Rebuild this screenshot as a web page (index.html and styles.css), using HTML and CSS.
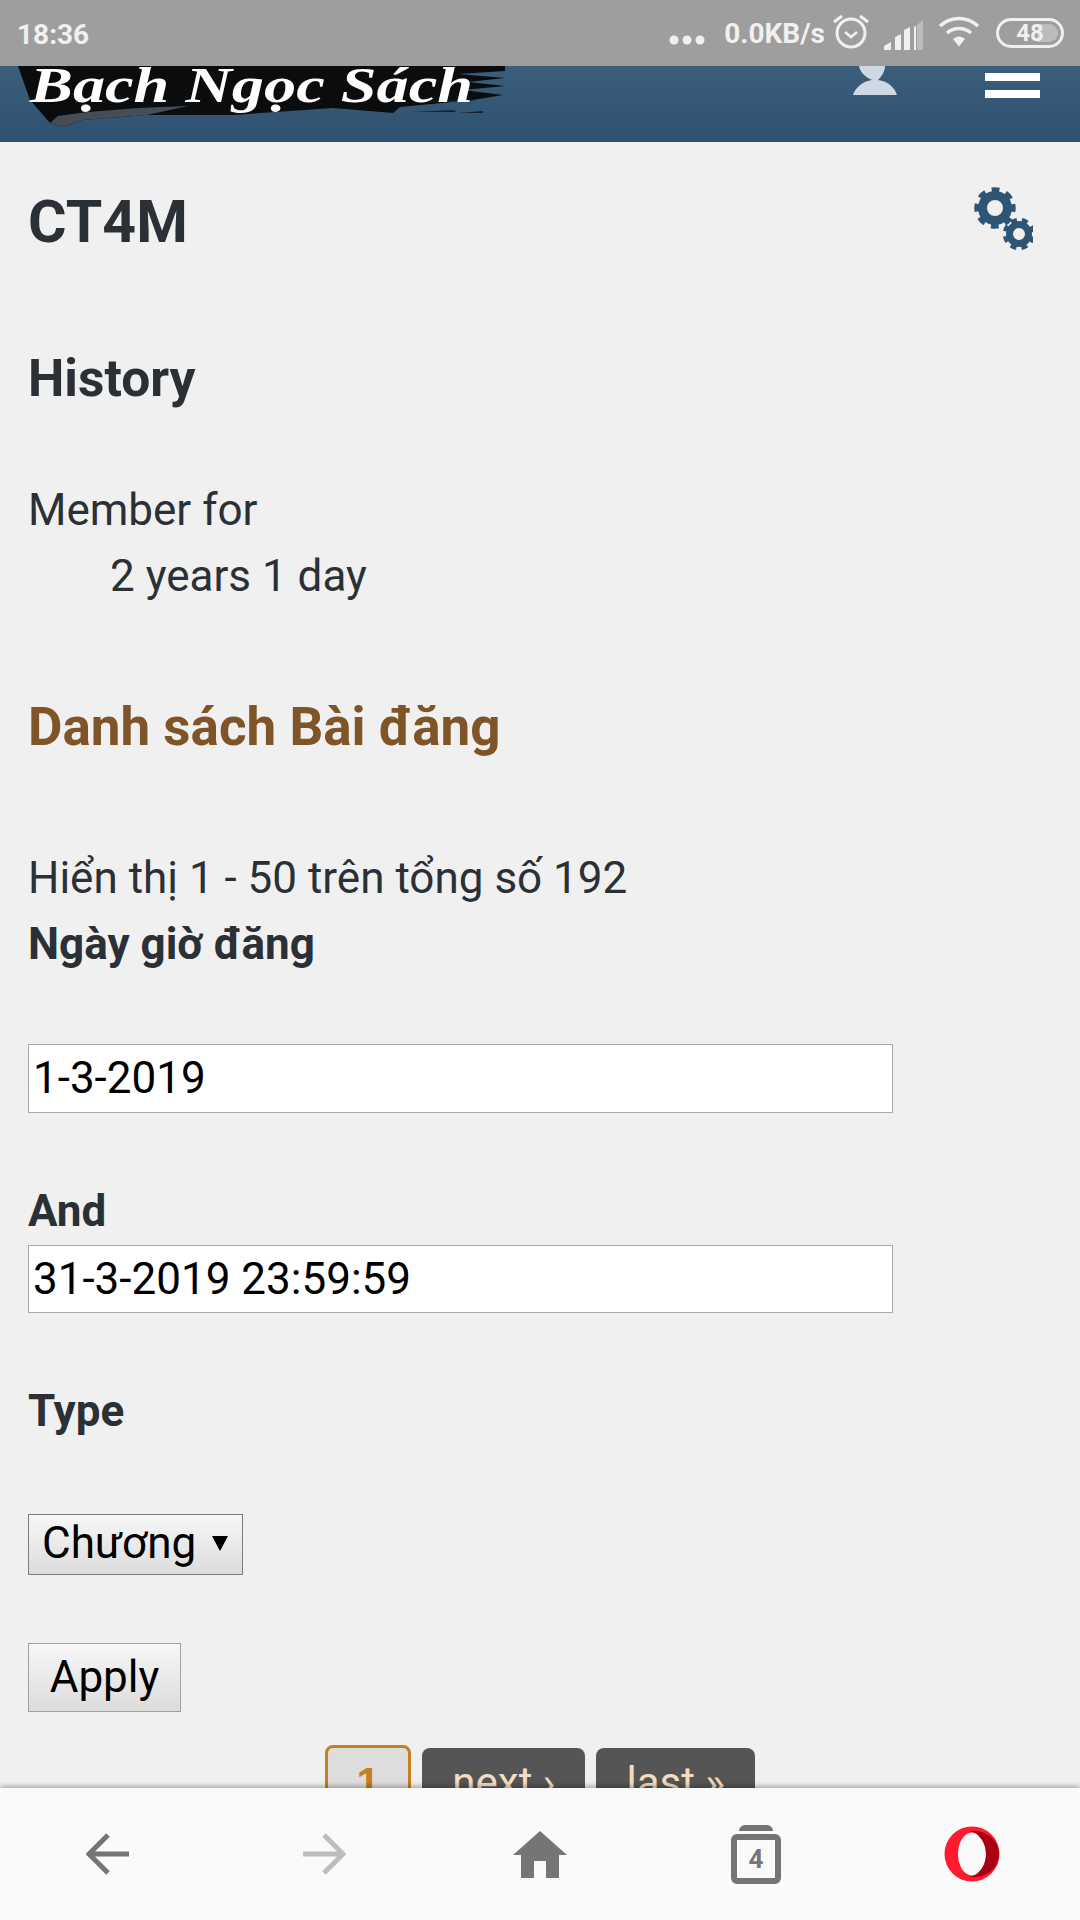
FILE: index.html
```html
<!DOCTYPE html>
<html lang="vi">
<head>
<meta charset="utf-8">
<title>CT4M</title>
<link rel="stylesheet" href="styles.css">
</head>
<body>
<div class="screen">
  <div class="status">
    <span class="clock">18:36</span>
    <div class="status-right">
      <svg class="dots" width="36" height="12" viewBox="0 0 36 12"><circle cx="5" cy="6" r="4.5"/><circle cx="18" cy="6" r="4.5"/><circle cx="31" cy="6" r="4.5"/></svg>
      <span class="speed">0.0KB/s</span>
      <svg class="alarm" width="36" height="36" viewBox="0 0 36 36"><circle cx="18" cy="20" r="14" fill="none" stroke="#f0f0f0" stroke-width="3"/><path d="M12 19l6 5 6-5" fill="none" stroke="#f0f0f0" stroke-width="2.5"/><path d="M1 9l8-6M35 9l-8-6" stroke="#f0f0f0" stroke-width="3"/></svg>
      <svg class="signal" width="40" height="30" viewBox="0 0 40 30"><path d="M0 30v-4l7-4v8zM11 30V17l6-3v16zM20 30V10l6-3v23zM30 30V7l2-1v24z" fill="#f0f0f0"/><path d="M33 30V5l6-5v30z" fill="#bcbcbc"/></svg>
      <svg class="wifi" width="42" height="32" viewBox="0 0 42 32"><path d="M2 10C13 0 29 0 40 10M9 17c7-6 17-6 24 0" fill="none" stroke="#f0f0f0" stroke-width="3.6"/><path d="M15 23c4-3.500 8-3.500 12 0l-6 7.500z" fill="#f0f0f0"/></svg>
      <div class="battery"><div class="battery-fill"></div><span class="battery-num">48</span></div>
    </div>
  </div>

  <header class="site-head">
    <svg class="logo" width="500" height="76" viewBox="0 0 500 76">
      <path d="M0 0H487V5L440 8 487 12 450 16 487 20 445 24 485 29 455 34 382 41 375 47 315 42 215 49 129 49 65 54 45 61 32 57 12 34z" fill="#0b0c0e"/>
      <path d="M32 57L45 61 65 54 129 49 170 40 120 42 70 46 40 50z" fill="#464e55"/>
      <path d="M400 36l60-3-10 3zM395 46l40-2 4 2zM440 47l25-2 0 2z" fill="#1a222a"/>
      <text class="logo-text" x="12" y="36" textLength="443" lengthAdjust="spacingAndGlyphs">Bạch Ngọc Sách</text>
    </svg>
    <div class="head-actions">
      <svg class="user" width="44" height="30" viewBox="0 0 44 30"><path d="M6 0H32C32 6 28 11 25 14 35 15 42 22 44 29H0C2 22 10 15 19 14 12 11 7 6 6 0z" fill="#ced9e4"/></svg>
      <div class="burger"><span class="burger-bar"></span><span class="burger-bar"></span></div>
    </div>
  </header>

  <main class="content">
    <div class="title-row">
      <h1 class="title">CT4M</h1>
      <svg class="gears" width="62" height="66" viewBox="0 0 62 66">
        <g fill="none" stroke="#2f5575">
          <circle cx="24" cy="24" r="12.500" stroke-width="9"/>
          <circle cx="24" cy="24" r="18" stroke-width="5.500" stroke-dasharray="7.500 6.640" transform="rotate(-12 24 24)"/>
          <circle cx="48" cy="50" r="9.500" stroke-width="7"/>
          <circle cx="48" cy="50" r="14" stroke-width="4.500" stroke-dasharray="6 5" transform="rotate(10 48 50)"/>
        </g>
      </svg>
    </div>

    <h2 class="section">History</h2>
    <dl class="history">
      <dt class="history-term">Member for</dt>
      <dd class="history-value">2 years 1 day</dd>
    </dl>

    <h2 class="section section-accent">Danh sách Bài đăng</h2>
    <p class="summary">Hiển thị 1 - 50 trên tổng số 192</p>

    <form class="filters">
      <label class="field-label label-first">Ngày giờ đăng</label>
      <div class="input first-input">1-3-2019</div>
      <label class="field-label label-and">And</label>
      <div class="input second-input">31-3-2019 23:59:59</div>
      <label class="field-label label-type">Type</label>
      <div class="select"><span>Chương</span><span class="caret"></span></div>
      <div class="apply">Apply</div>
    </form>

    <nav class="pager">
      <span class="page current">1</span>
      <span class="page">next ›</span>
      <span class="page">last »</span>
    </nav>
  </main>

  <footer class="browser-bar">
    <div class="bar-item"><svg width="44" height="44" viewBox="0 0 44 44"><path d="M43 22H3M22 3L3 22l19 19" fill="none" stroke="#757575" stroke-width="5"/></svg></div>
    <div class="bar-item"><svg width="44" height="44" viewBox="0 0 44 44"><path d="M1 22h40M22 3l19 19-19 19" fill="none" stroke="#bdbdbd" stroke-width="5"/></svg></div>
    <div class="bar-item"><svg width="54" height="47" viewBox="0 0 54 47"><path d="M27 0l27 24H46V47H33V30H21V47H8V24H0z" fill="#757575"/></svg></div>
    <div class="bar-item tabs-item">
      <div class="tabs-stack">
        <span class="tabs-top"></span>
        <span class="tabs-box">4</span>
      </div>
    </div>
    <div class="bar-item"><svg width="56" height="56" viewBox="0 0 56 56"><circle cx="28" cy="28" r="27.500" fill="#ff1b2d"/><ellipse cx="28" cy="28" rx="14" ry="21.500" fill="#fafafa"/><path d="M25 5c17-2 30 9 30 23S42 53 25 51c9-1 17-11 17-23S34 6 25 5z" fill="#a70014"/></svg></div>
  </footer>
</div>
</body>
</html>
```
FILE: styles.css
```css
* { box-sizing: border-box; }
html, body { margin: 0; padding: 0; }
body { font-family: Roboto, "Noto Sans", sans-serif; color: #2a3035; }
.screen { width: 1080px; height: 1920px; display: flex; flex-direction: column; overflow: hidden; background: #f0f0f0; }

.status { height: 66px; flex: none; background: #9e9e9e; color: #f0f0f0; display: flex; justify-content: space-between; align-items: center; padding: 2px 16px 0 17px; font-weight: 700; font-size: 28px; position: relative; z-index: 2; }
.status-right { display: flex; align-items: center; margin-top: -2px; }
.dots { fill: #f0f0f0; margin-top: 14px; }
.speed { margin-left: 19px; font-size: 28px; }
.alarm { margin-left: 8px; margin-top: -4px; }
.signal { margin-left: 15px; margin-top: 4px; }
.wifi { margin-left: 14px; margin-top: -2px; }
.battery { width: 68px; height: 30px; margin-left: 16px; border: 3px solid #f0f0f0; border-radius: 15px; position: relative; display: flex; align-items: center; justify-content: center; padding: 3px; }
.battery-fill { position: absolute; left: 3px; top: 3px; bottom: 3px; right: 3px; border-radius: 10px; background: linear-gradient(90deg, #9e9e9e 0 62%, #bcbcbc 62%); }
.battery-num { position: relative; font-size: 24px; line-height: 1; }

.site-head { height: 76px; flex: none; background: linear-gradient(#3b5e7b, #2e5170); display: flex; justify-content: space-between; padding-left: 18px; overflow: hidden; }
.logo { flex: none; }
.logo-text { font-family: "Liberation Serif", serif; font-style: italic; font-weight: 700; font-size: 50px; fill: #fff; }
.head-actions { display: flex; padding-right: 40px; align-items: flex-start; }
.user { display: block; margin-right: 88px; }
.burger { width: 55px; display: flex; flex-direction: column; gap: 9px; padding-top: 7px; }
.burger-bar { height: 8px; background: #fff; display: block; }

.content { flex: 1; min-height: 0; overflow: hidden; padding: 0 28px; }
.title-row { display: flex; justify-content: space-between; align-items: flex-start; padding-top: 47px; }
.title { margin: 0; font-size: 59px; line-height: 66px; font-weight: 700; }
.gears { margin: -5px 19px 0 0; }
.section { margin: 91px 0 0; font-size: 51.500px; line-height: 66px; font-weight: 700; }
.history { margin: 0; padding-top: 65px; font-size: 44px; line-height: 66px; }
.history-term { margin: 0; }
.history-value { margin: 0 0 0 82px; }
.section-accent { color: #7f5426; margin-top: 85px; font-size: 53px; }
.summary { margin: 85px 0 0; font-size: 44px; line-height: 66px; }
.filters { display: flex; flex-direction: column; align-items: flex-start; }
.field-label { font-size: 44px; font-weight: 700; line-height: 66px; display: block; }
.input { width: 865px; height: 69px; background: #fff; border: 1px solid #a9a9a9; font-size: 44px; line-height: 67px; padding-left: 4px; color: #000; }
.first-input { margin-top: 67px; }
.second-input { height: 68px; }
.label-and { margin-top: 65px; height: 67px; }
.label-type { margin-top: 65px; }
.select { margin-top: 70px; width: 215px; height: 61px; border: 1px solid #7d7d7d; background: linear-gradient(#f7f7f7, #dcdcdc); color: #000; font-size: 44px; line-height: 57px; padding-left: 13px; display: flex; }
.caret { margin: 21px 0 0 16px; border: 8.500px solid transparent; border-top: 15px solid #000; border-bottom: 0; height: 0; }
.apply { margin-top: 68px; width: 153px; height: 69px; border: 1px solid #a0a0a0; background: linear-gradient(#f7f7f7, #dcdcdc); color: #000; font-size: 44px; line-height: 67px; text-align: center; }
.pager { display: flex; justify-content: center; gap: 11px; margin-top: 33px; align-items: flex-start; }
.page { display: block; background: #555; color: #f5dcc0; font-size: 42px; line-height: 66px; padding: 2px 30px 6px; border-radius: 8px; margin-top: 3px; }
.current { background: #ddd; color: #c47f1e; border: 3px solid #c47f1e; margin-top: 0; padding: 2px 28.500px 6px; font-weight: 700; font-family: "Liberation Sans", sans-serif; }

.browser-bar { height: 132px; flex: none; background: #fafafa; display: grid; grid-template-columns: repeat(5, 216px); align-items: center; justify-items: center; box-shadow: 0 -2px 5px rgba(0,0,0,.3); position: relative; }
.bar-item { display: flex; align-items: center; justify-content: center; }
.tabs-stack { display: flex; flex-direction: column; align-items: center; gap: 3px; }
.tabs-top { width: 34px; height: 6px; background: #757575; border-radius: 6px 6px 0 0; display: block; }
.tabs-box { width: 50px; height: 50px; border: 6px solid #757575; border-radius: 6px; color: #757575; font-size: 26px; font-weight: 700; line-height: 38px; text-align: center; background: #fafafa; }
```
